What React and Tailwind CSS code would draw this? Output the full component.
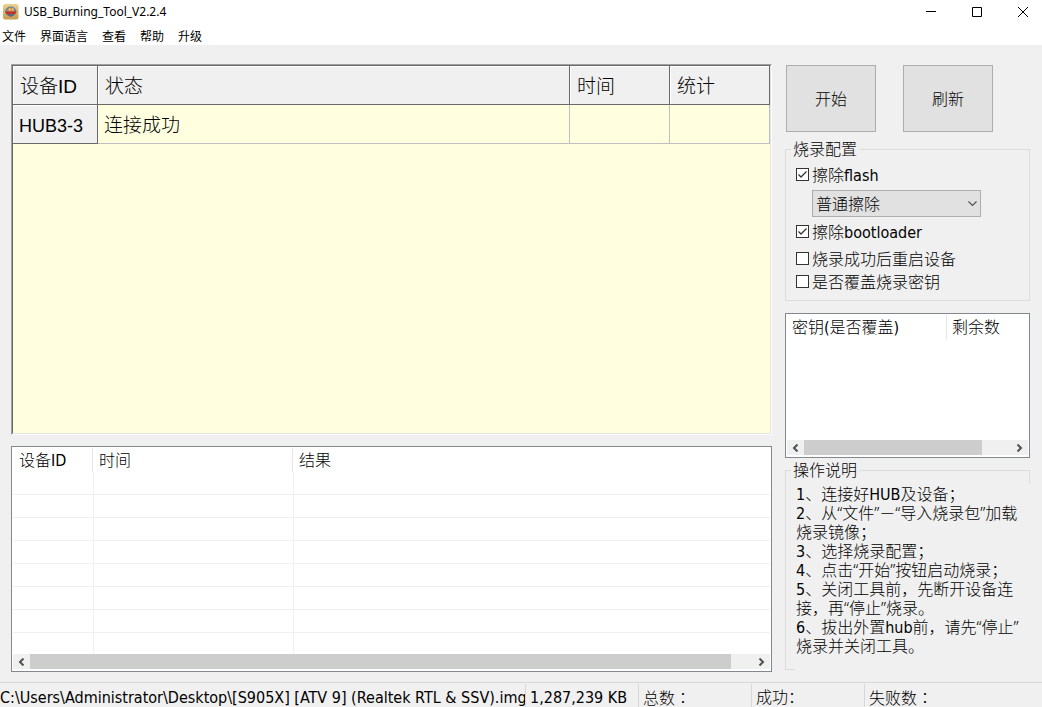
import React from "react";

const MENUS = ["文件", "界面语言", "查看", "帮助", "升级"];

const STEPS = [
  ["1、连接好HUB及设备；"],
  ["2、从“文件”－“导入烧录包”加载", "烧录镜像；"],
  ["3、选择烧录配置；"],
  ["4、点击“开始”按钮启动烧录；"],
  ["5、关闭工具前，先断开设备连", "接，再“停止”烧录。"],
  ["6、拔出外置hub前，请先“停止”", "烧录并关闭工具。"],
];

function AppIcon() {
  return (
    <svg className="h-4 w-4" viewBox="0 0 16 16" aria-hidden="true">
      <defs>
        <linearGradient id="tile" x1="0" y1="0" x2="0" y2="1">
          <stop offset="0" stopColor="#ecd08c" />
          <stop offset="1" stopColor="#c99a4e" />
        </linearGradient>
      </defs>
      <rect x="0" y="0" width="15.500" height="15.500" rx="2.500" fill="url(#tile)" />
      <ellipse cx="7.800" cy="7.500" rx="5.600" ry="5" fill="#5f86a8" />
      <path d="M4 6.500C5 4.500 6 3.500 7.800 3.500s2.800 1 3.800 3l-1.600 1H5.500z" fill="#d98a4a" />
      <path d="M6 4.500h1.500v2H6zM9 4.500h1.500v2H9z" fill="#f2d38a" />
      <path d="M2.200 7.500h11.200c0 1.600-1.400 2.700-3 2.700H5.200c-1.600 0-3-1.100-3-2.700z" fill="#c8321e" />
      <path d="M4.200 10.200h7.200c-1 1.800-2 2.300-3.600 2.300s-2.600-.5-3.600-2.300z" fill="#5a6a7c" />
    </svg>
  );
}

function TitleBar() {
  const control = "flex h-6 w-[10px] items-center justify-center";
  return (
    <header className="flex h-6 items-center justify-between bg-white pr-[14px] pl-[3px]">
      <div className="flex items-center gap-[5px]">
        <AppIcon />
        <h1 className="font-['Noto_Sans',sans-serif] text-[12px] leading-4">USB_Burning_Tool_V2.2.4</h1>
      </div>
      <div className="flex gap-9">
        <button aria-label="最小化" className={control}>
          <svg width="10" height="10" viewBox="0 0 10 10"><path d="M0 4.500h10" stroke="#000" /></svg>
        </button>
        <button aria-label="最大化" className={control}>
          <svg width="10" height="10" viewBox="0 0 10 10"><path d="M.5.5h9v9h-9z" fill="none" stroke="#000" /></svg>
        </button>
        <button aria-label="关闭" className={control}>
          <svg width="10" height="10" viewBox="0 0 10 10"><path d="M0 0l10 10M10 0L0 10" stroke="#000" /></svg>
        </button>
      </div>
    </header>
  );
}

function MenuBar() {
  return (
    <nav className="flex h-[21px] items-start gap-[14px] bg-white pl-[2px]">
      {MENUS.map((m) => (
        <button key={m} className="pt-px text-[12px] leading-6">{m}</button>
      ))}
    </nav>
  );
}

function Arrow({ dir }) {
  return (
    <svg width="7" height="8" viewBox="0 0 7 8" aria-hidden="true">
      <path
        d={dir === "left" ? "M5.500 .5L2 4l3.500 3.500" : "M1.500 .5L5 4 1.500 7.500"}
        fill="none"
        stroke="#505050"
        strokeWidth="2"
      />
    </svg>
  );
}

function ScrollBar({ children }) {
  return (
    <div className="mb-px flex h-[15px] shrink-0 bg-[#f0f0f0]">
      <button aria-label="向左滚动" className="flex w-[17px] items-center justify-center"><Arrow dir="left" /></button>
      <div className="flex-1">{children}</div>
      <button aria-label="向右滚动" className="flex w-[17px] items-center justify-center"><Arrow dir="right" /></button>
    </div>
  );
}

function DeviceGrid() {
  const head =
    "h-[39px] border-r border-b border-[#696969] bg-[#f0f0f0] px-[7px] pt-[3px] text-left font-light shadow-[inset_1px_1px_0_#fff]";
  const rowHead =
    "h-[39px] border-r border-b border-[#696969] bg-[#f0f0f0] px-[6px] pt-[3px] text-left text-[18px] font-light shadow-[inset_1px_1px_0_#fff]";
  const cell = "h-[39px] border-r border-b border-[#c0c0c0] px-[6px] pt-[3px]";
  return (
    <section className="flex-1 border border-t-[#a0a0a0] border-r-white border-b-white border-l-[#a0a0a0]">
      <div className="h-full border border-t-[#696969] border-r-[#e3e3e3] border-b-[#e3e3e3] border-l-[#696969] bg-[#ffffe0]">
        <table className="w-full table-fixed border-separate border-spacing-0 font-['Liberation_Sans','Noto_Sans_CJK_SC',sans-serif] text-[19px] leading-6 font-light">
          <colgroup>
            <col className="w-[85px]" />
            <col />
            <col className="w-[100px]" />
            <col className="w-[100px]" />
          </colgroup>
          <thead>
            <tr>
              <th className={head}>设备ID</th>
              <th className={head}>状态</th>
              <th className={head}>时间</th>
              <th className={head}>统计</th>
            </tr>
          </thead>
          <tbody>
            <tr>
              <th scope="row" className={rowHead}>HUB3-3</th>
              <td className={cell}>连接成功</td>
              <td className={cell}></td>
              <td className={cell}></td>
            </tr>
          </tbody>
        </table>
      </div>
    </section>
  );
}

function ResultList() {
  const head = "h-6 border-r border-[#e5e5e5] px-[6px] pt-px text-left leading-[23px] font-light";
  const line = "h-[23px] border-b border-[#f0f0f0]";
  return (
    <section className="flex h-[226px] flex-col border border-[#828790] bg-white p-px">
      <div className="flex-1 overflow-hidden">
        <table className="w-full table-fixed border-separate border-spacing-0 text-[16px]">
          <colgroup>
            <col className="w-[80px]" />
            <col className="w-[200px]" />
            <col />
          </colgroup>
          <thead>
            <tr>
              <th className={head}>设备ID</th>
              <th className={head}>时间</th>
              <th className="h-6 px-[6px] pt-px text-left leading-[23px] font-light">结果</th>
            </tr>
          </thead>
          <tbody>
            {[0, 1, 2, 3, 4, 5, 6, 7].map((r) => (
              <tr key={r}>
                <td className={line}></td>
                <td className="h-[23px] border-b border-l border-[#f0f0f0]"></td>
                <td className="h-[23px] border-b border-l border-[#f0f0f0]"></td>
              </tr>
            ))}
          </tbody>
        </table>
      </div>
      <ScrollBar><div className="h-full w-[97%] bg-[#cdcdcd]" /></ScrollBar>
    </section>
  );
}

function Check({ label, checked }) {
  return (
    <label className="flex h-[19px] items-center gap-[3px]">
      <span className="grid h-[13px] w-[13px] shrink-0">
        <input
          type="checkbox"
          defaultChecked={checked}
          className="peer col-start-1 row-start-1 h-[13px] w-[13px] appearance-none border border-[#333] bg-white"
        />
        <svg
          className="pointer-events-none col-start-1 row-start-1 hidden peer-checked:block"
          width="13"
          height="13"
          viewBox="0 0 13 13"
          aria-hidden="true"
        >
          <path d="M2.500 6.500l2.500 2.500 5.500-5.500" fill="none" stroke="#333" strokeWidth="1.300" />
        </svg>
      </span>
      <span className="pt-[2px]">{label}</span>
    </label>
  );
}

function BurnConfig() {
  return (
    <fieldset className="mt-[9px] h-[160px] border border-[#dcdcdc] pl-[10px]">
      <legend className="-ml-[5px] h-4 px-[2px] leading-[18px]">烧录配置</legend>
      <div className="flex flex-col pt-2">
        <Check label="擦除flash" checked />
        <div className="mt-[6px] mr-12 ml-4 grid">
          <select
            aria-label="擦除方式"
            className="col-start-1 row-start-1 h-[27px] w-full appearance-none border border-[#adadad] bg-[#e1e1e1] pt-[2px] pl-[3px]"
          >
            <option>普通擦除</option>
          </select>
          <svg
            className="pointer-events-none col-start-1 row-start-1 mr-1 self-center justify-self-end"
            width="9"
            height="6"
            viewBox="0 0 9 6"
            aria-hidden="true"
          >
            <path d="M.5.5l4 4 4-4" fill="none" stroke="#505050" strokeWidth="1.200" />
          </svg>
        </div>
        <div className="mt-[5px]"><Check label="擦除bootloader" checked /></div>
        <div className="mt-2"><Check label="烧录成功后重启设备" /></div>
        <div className="mt-1"><Check label="是否覆盖烧录密钥" /></div>
      </div>
    </fieldset>
  );
}

function KeyList() {
  return (
    <section className="mt-3 flex h-[145px] flex-col border border-[#828790] bg-white p-px">
      <div className="flex-1">
        <table className="w-full table-fixed border-separate border-spacing-0 leading-[23px]">
          <thead>
            <tr>
              <th className="h-6 w-[160px] border-r border-[#e5e5e5] px-[5px] pt-px text-left font-light">密钥(是否覆盖)</th>
              <th className="h-6 px-[5px] pt-px text-left font-light">剩余数</th>
            </tr>
          </thead>
        </table>
      </div>
      <ScrollBar><div className="h-full w-[86%] bg-[#cdcdcd]" /></ScrollBar>
    </section>
  );
}

function StepLine({ text }) {
  return (
    <span className="block">
      {text.split(/([“”])/).map((part, i) =>
        part === "“" || part === "”" ? (
          <span key={i} className="font-['Noto_Sans',sans-serif] leading-none">{part}</span>
        ) : (
          part
        )
      )}
    </span>
  );
}

function Instructions() {
  return (
    <fieldset className="mt-1 h-[208px] border border-[#dcdcdc] pl-[9px]">
      <legend className="-ml-1 h-4 px-[2px] leading-[18px]">操作说明</legend>
      <div className="-mr-px mt-[6px] h-[186px] bg-[#f0f0f0] pt-px pl-px leading-[19px] whitespace-nowrap">
        {STEPS.map((lines) => (
          <p key={lines[0]}>
            {lines.map((l) => (
              <StepLine key={l} text={l} />
            ))}
          </p>
        ))}
      </div>
    </fieldset>
  );
}

function StatusBar() {
  const part = "mt-px w-[113px] shrink-0 border-r border-[#d7d7d7] pt-[5px] pl-1";
  const colon = "font-['Noto_Sans_CJK_TC',sans-serif] leading-none";
  return (
    <footer className="flex h-[25px] overflow-hidden border-t border-[#d7d7d7] leading-[18px] font-light whitespace-nowrap">
      <div className="mt-px w-[526px] shrink-0 overflow-hidden border-r border-[#d7d7d7] pt-[5px]">
        C:\Users\Administrator\Desktop\[S905X] [ATV 9] (Realtek RTL &amp; SSV).img
      </div>
      <div className={part}>1,287,239 KB</div>
      <div className={part}>总数<span lang="zh-TW" className={colon}>：</span></div>
      <div className={part}>成功：</div>
      <div className="mt-px flex-1 pt-[5px] pl-1">失败数<span lang="zh-TW" className={colon}>：</span></div>
    </footer>
  );
}

export default function App() {
  return (
    <div
      lang="zh-CN"
      className="flex min-h-screen flex-col bg-[#f0f0f0] font-['DejaVu_Sans_Condensed','Noto_Sans_CJK_SC',sans-serif] text-[16px] text-black"
    >
      <TitleBar />
      <MenuBar />
      <main className="flex flex-1 gap-[13px] pt-[19px] pr-3 pb-[10px] pl-[11px]">
        <div className="flex min-w-0 flex-1 flex-col gap-[11px]">
          <DeviceGrid />
          <ResultList />
        </div>
        <aside className="w-[245px] shrink-0 font-light">
          <div className="flex gap-[27px] pt-px pl-px">
            <button className="h-[67px] w-[90px] border border-[#adadad] bg-[#e1e1e1] pt-[2px]">开始</button>
            <button className="h-[67px] w-[90px] border border-[#adadad] bg-[#e1e1e1] pt-[2px]">刷新</button>
          </div>
          <BurnConfig />
          <KeyList />
          <Instructions />
        </aside>
      </main>
      <StatusBar />
    </div>
  );
}
